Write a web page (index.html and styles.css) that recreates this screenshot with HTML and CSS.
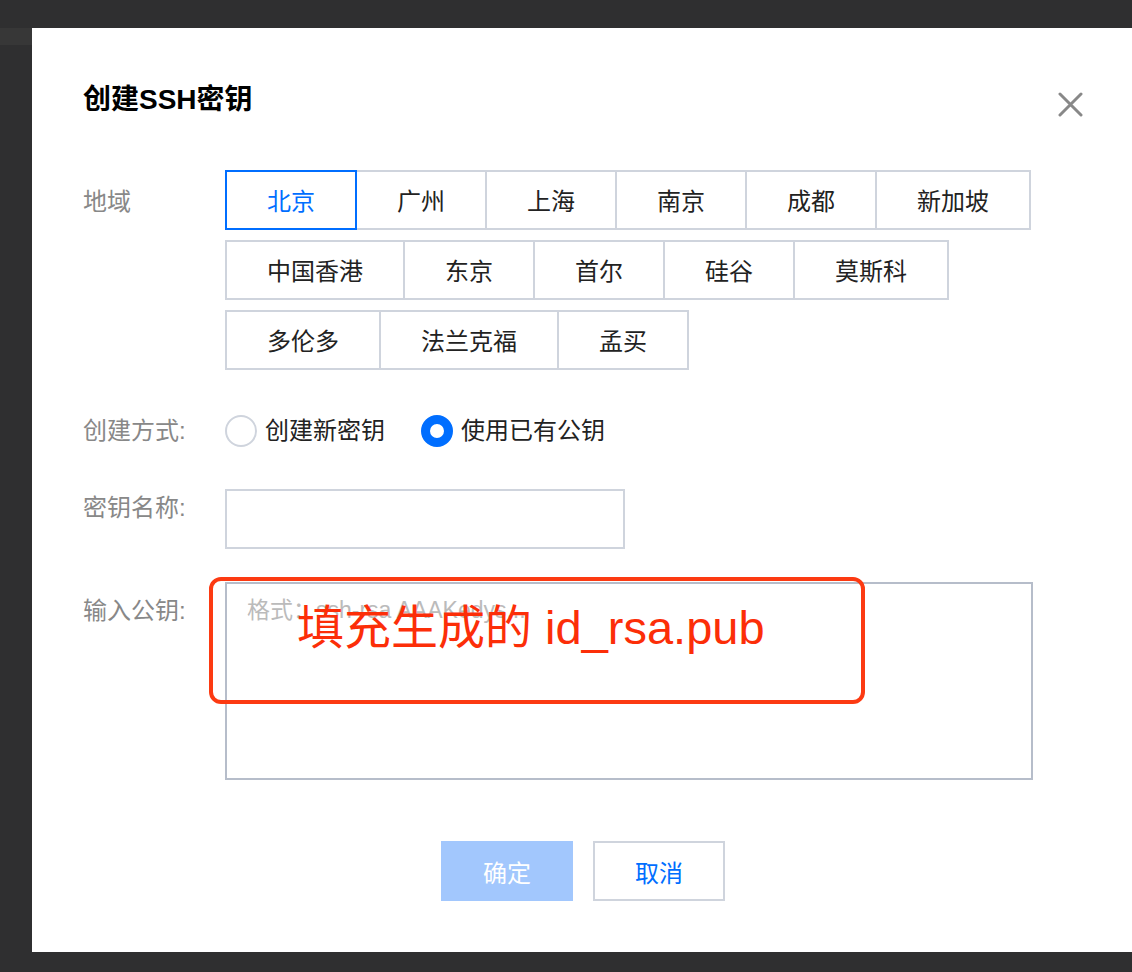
FILE: index.html
```html
<!DOCTYPE html>
<html lang="zh-CN">
<head>
<meta charset="utf-8">
<title>创建SSH密钥</title>
<link rel="stylesheet" href="styles.css">
</head>
<body>
<div class="page">
  <div class="side"><div class="side-patch"></div></div>
  <div class="modal">
    <div class="modal-head">
      <h2 class="modal-title">创建SSH密钥</h2>
      <svg class="close" width="25" height="25" viewBox="0 0 25 25"><path d="M2 2 L23 23 M23 2 L2 23" stroke="#888" stroke-width="3" stroke-linecap="round" fill="none"/></svg>
    </div>
    <div class="form">
      <div class="row">
        <div class="label label-region">地域</div>
        <div class="regions">
          <span class="region is-active">北京</span>
          <span class="region">广州</span>
          <span class="region">上海</span>
          <span class="region">南京</span>
          <span class="region">成都</span>
          <span class="region">新加坡</span>
          <span class="region">中国香港</span>
          <span class="region">东京</span>
          <span class="region">首尔</span>
          <span class="region">硅谷</span>
          <span class="region">莫斯科</span>
          <span class="region">多伦多</span>
          <span class="region">法兰克福</span>
          <span class="region">孟买</span>
        </div>
      </div>
      <div class="row row-method">
        <div class="label label-method">创建方式:</div>
        <div class="radios">
          <label class="radio"><span class="radio-dot"></span>创建新密钥</label>
          <label class="radio"><span class="radio-dot is-checked"></span>使用已有公钥</label>
        </div>
      </div>
      <div class="row row-name">
        <div class="label label-name">密钥名称:</div>
        <div class="input"></div>
      </div>
      <div class="row row-key">
        <div class="label label-key">输入公钥:</div>
        <div class="textarea">
          <span class="placeholder">格式：ssh-rsa AAAKedys...</span>
          <div class="annotation">填充生成的 id_rsa.pub</div>
        </div>
      </div>
    </div>
    <div class="footer">
      <button class="btn btn-primary">确定</button>
      <button class="btn btn-cancel">取消</button>
    </div>
  </div>
</div>
</body>
</html>
```

FILE: styles.css
```css
* { box-sizing: border-box; }
html, body {
  margin: 0;
  padding: 0;
  height: 972px;
  overflow: hidden;
  background: #2f2f30;
  font-family: "Liberation Sans", "Noto Sans CJK SC", sans-serif;
}
.page {
  display: flex;
  padding-top: 28px;
  height: 972px;
}
.side {
  width: 32px;
  flex: none;
}
.side-patch {
  height: 17px;
  background: #373737;
}
.modal {
  flex: 1;
  height: 924px;
  background: #fff;
  padding: 52px 49px 0 51px;
}
.modal-head {
  display: flex;
  justify-content: space-between;
  align-items: flex-start;
}
.modal-title {
  margin: 0;
  font-size: 28px;
  line-height: 40px;
  font-weight: bold;
  color: #000;
}
.close {
  margin-top: 12px;
  display: block;
}
.form {
  margin-top: 50px;
}
.row {
  display: flex;
  align-items: flex-start;
}
.label {
  width: 142px;
  flex: none;
  font-size: 24px;
  color: #888;
}
.label-region { line-height: 63px; }
.label-method { line-height: 32px; }
.label-name { line-height: 38px; }
.label-key { line-height: 36px; padding-top: 11px; }
.regions {
  width: 808px;
  display: flex;
  flex-wrap: wrap;
  row-gap: 10px;
}
.region {
  height: 60px;
  line-height: 53px;
  padding: 3px 40px 0;
  border: 2px solid #cfd4dd;
  margin-right: -2px;
  font-size: 24px;
  color: #222;
  background: #fff;
}
.region.is-active {
  border-color: #006eff;
  color: #006eff;
  position: relative;
  z-index: 1;
}
.row-method { margin-top: 45px; }
.radios {
  display: flex;
  gap: 36px;
}
.radio {
  display: flex;
  align-items: center;
  gap: 8px;
  font-size: 24px;
  line-height: 32px;
  color: #222;
}
.radio-dot {
  width: 32px;
  height: 32px;
  border-radius: 50%;
  border: 2px solid #cfd4dd;
}
.radio-dot.is-checked {
  border: 9px solid #006eff;
}
.row-name { margin-top: 42px; }
.input {
  width: 400px;
  height: 60px;
  border: 2px solid #cfd4dd;
}
.row-key { margin-top: 33px; }
.textarea {
  position: relative;
  width: 808px;
  height: 198px;
  border: 2px solid #b6bdca;
  padding: 10px 20px;
}
.placeholder {
  font-size: 23px;
  line-height: 32px;
  color: #bbb;
}
.annotation {
  position: absolute;
  left: -18px;
  top: -7px;
  width: 656px;
  height: 127px;
  border: 4px solid #fc3a12;
  border-radius: 12px;
  padding: 24px 0 0 84px;
  font-size: 47px;
  line-height: 46px;
  color: #fc2e08;
  white-space: nowrap;
}
.footer {
  margin-top: 61px;
  display: flex;
  justify-content: center;
  gap: 20px;
}
.btn {
  width: 132px;
  height: 60px;
  font-family: inherit;
  font-size: 24px;
  padding: 0;
  cursor: pointer;
}
.btn-primary {
  background: #a2c7fd;
  border: none;
  color: #fff;
}
.btn-cancel {
  background: #fff;
  border: 2px solid #cfd4dd;
  color: #006eff;
}
```
